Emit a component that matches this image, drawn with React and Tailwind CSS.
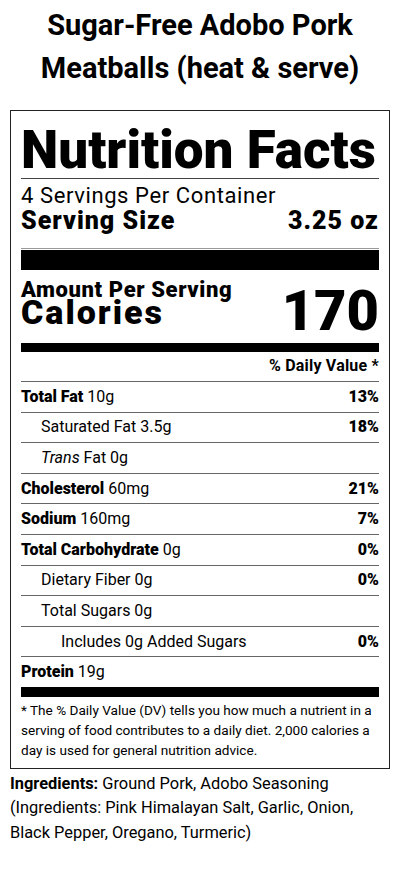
const rows = [
    { label: "Total Fat", amount: "10g", dv: "13%", bold: true, indent: 0 },
    { label: "Saturated Fat", amount: "3.5g", dv: "18%", indent: 1 },
    { label: "Trans", amount: "Fat 0g", dv: "", indent: 1, italic: true },
    { label: "Cholesterol", amount: "60mg", dv: "21%", bold: true, indent: 0 },
    { label: "Sodium", amount: "160mg", dv: "7%", bold: true, indent: 0 },
    { label: "Total Carbohydrate", amount: "0g", dv: "0%", bold: true, indent: 0 },
    { label: "Dietary Fiber", amount: "0g", dv: "0%", indent: 1 },
    { label: "Total Sugars", amount: "0g", dv: "", indent: 1 },
    { label: "Includes 0g Added Sugars", amount: "", dv: "0%", indent: 2 },
];

function NutrientRow({ row }) {
    const pad = row.indent === 2 ? "pl-[40px]" : row.indent === 1 ? "pl-[20px]" : "";
    return (
        <div className="flex items-center justify-between h-[30.6px] border-b border-[#666]">
            <span className={pad}>
                {row.bold && <span className="font-black">{row.label}</span>}
                {row.italic && <span className="italic">{row.label}</span>}
                {!row.bold && !row.italic && row.label}
                {row.amount && " " + row.amount}
            </span>
            <span className="font-black">{row.dv}</span>
        </div>
    );
}

function App() {
    return (
        <div className="bg-white text-black px-[10px] pb-6 font-['Roboto',sans-serif]">
            {/* product title */}
            <h1 className="pt-[4px] text-center text-[29px] font-bold leading-[43px]">
                Sugar-Free Adobo Pork
                <br />
                Meatballs (heat &amp; serve)
            </h1>

            {/* label box */}
            <div className="mt-[20px] border border-[#222] px-[10px]">
                <div className="pt-[14px] pb-[3px] border-b border-[#444]">
                    <div className="text-[53px] font-black leading-[50px]">Nutrition Facts</div>
                </div>

                <div className="pt-[5px] pb-[14px] border-b border-[#999]">
                    <div className="text-[22px] leading-[24px] tracking-[0.6px]">4 Servings Per Container</div>
                    <div className="flex justify-between text-[25px] font-black leading-[26px] tracking-[1px]">
                        <span>Serving Size</span>
                        <span>3.25 oz</span>
                    </div>
                </div>
                <div className="mt-[1px] h-[20px] bg-black" />

                <div className="flex justify-between items-start pt-[10px]">
                    <div>
                        <div className="text-[22px] font-black leading-[19px] tracking-[0.6px]">Amount Per Serving</div>
                        <div className="mt-[1px] text-[34px] font-black leading-[24px] tracking-[2px]">Calories</div>
                    </div>
                    <div className="mt-[3px] text-[56px] font-black leading-[56px]">170</div>
                </div>
                <div className="mt-[4px] h-[9px] bg-black" />

                <div className="pt-[4px] pb-[5px] text-right text-[16px] font-bold leading-[20px] tracking-[0.2px] border-b border-[#666]">
                    % Daily Value *
                </div>

                <div className="text-[16px]">
                    {rows.map((row, index) => (
                        <NutrientRow key={index} row={row} />
                    ))}
                    <div className="flex items-center h-[29.6px]">
                        <span>
                            <span className="font-black">Protein</span> 19g
                        </span>
                    </div>
                </div>
                <div className="h-[10px] bg-black" />

                <p className="pt-[3px] pb-[8px] text-[13.6px] leading-[20px]">
                    * The % Daily Value (DV) tells you how much a nutrient in a serving of food contributes to a daily diet. 2,000 calories a day is used for general nutrition advice.
                </p>
            </div>

            {/* ingredients */}
            <p className="mt-[3px] text-[16.4px] leading-[24.5px]">
                <span className="font-bold">Ingredients:</span> Ground Pork, Adobo Seasoning (Ingredients: Pink Himalayan Salt, Garlic, Onion, Black Pepper, Oregano, Turmeric)
            </p>
        </div>
    );
}

export default App;
